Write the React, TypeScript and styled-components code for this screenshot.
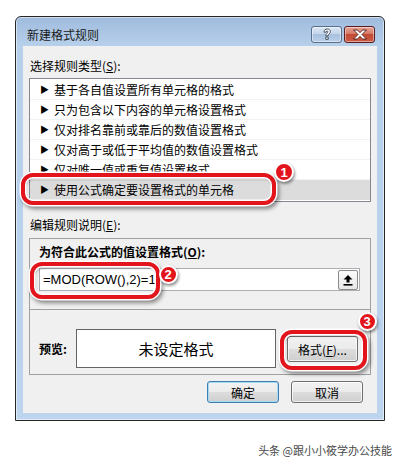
import React from "react";
import styled, { createGlobalStyle } from "styled-components";

const Global = createGlobalStyle`
  html, body { margin: 0; padding: 0; background: #ffffff; }
  body { font-family: "Noto Sans CJK SC", "Liberation Sans", sans-serif; color: #000; }
  * { box-sizing: border-box; }
`;

const Page = styled.div`
  position: relative;
  width: 401px;
  height: 464px;
  padding: 16px 0 0 15px;
  display: flex;
  flex-direction: column;
`;

const Window = styled.div`
  width: 370px;
  height: 405px;
  border: 1px solid #262626;
  border-radius: 6px 6px 0 0;
  background: linear-gradient(to bottom, #9fbbdd 0px, #b6cfea 28px, #bcd4ee 100%);
  padding: 0 7px 7px 7px;
  display: flex;
  flex-direction: column;
  box-shadow: inset 0 0 0 1px rgba(255, 255, 255, 0.55);
`;

const TitleBar = styled.div`
  height: 29px;
  display: flex;
  align-items: flex-start;
  padding-left: 4px;
`;

const Title = styled.div`
  margin-top: 9px;
  line-height: 17px;
  font-size: 12px;
  color: #1b1b1b;
  flex: 1;
`;

const CaptionButtons = styled.div`
  margin-top: 9px;
  margin-right: 2px;
  display: flex;
  gap: 2px;
`;

const CaptionButton = styled.div<{ $close?: boolean }>`
  width: 31px;
  height: 17px;
  border-radius: 3px;
  border: 1px solid ${(p) => (p.$close ? "#5a1e1e" : "#5b6f89")};
  background: ${(p) =>
    p.$close
      ? "linear-gradient(to bottom, #e8a396 0%, #d67a68 45%, #c24a35 50%, #cc5a45 100%)"
      : "linear-gradient(to bottom, #dce7f4 0%, #c4d5ea 45%, #a9c1df 50%, #b9cfe9 100%)"};
  box-shadow: inset 0 0 0 1px rgba(255, 255, 255, 0.45);
  display: flex;
  align-items: center;
  justify-content: center;
`;

const Content = styled.div`
  flex: 1;
  background: #f0f0f0;
  padding: 12px 6px 0 6px;
  display: flex;
  flex-direction: column;
`;

const SectionLabel = styled.div<{ $mt?: number }>`
  font-size: 12px;
  line-height: 16px;
  padding-left: 1px;
  margin-top: ${(p) => p.$mt ?? 0}px;
  color: #000;
  u { text-decoration: underline; text-underline-offset: 1px; }
`;

const ListBox = styled.div`
  margin-top: 4px;
  height: 124px;
  border: 1px solid #828790;
  background: #ffffff;
  padding-top: 1px;
  display: flex;
  flex-direction: column;
`;

const ListRow = styled.div<{ $selected?: boolean }>`
  height: 20px;
  display: flex;
  align-items: center;
  padding-left: 10px;
  font-size: 12px;
  background: ${(p) => (p.$selected ? "#dcdcdc" : "transparent")};
  border-bottom: 1px solid ${(p) => (p.$selected ? "transparent" : "#f2f2f2")};
`;

const Arrow = styled.span`
  font-size: 9px;
  width: 14px;
  color: #000;
`;

const GroupBox = styled.div`
  margin-top: 5px;
  border: 1px solid #a0a0a0;
  display: flex;
  flex-direction: column;
`;

const GroupTop = styled.div`
  padding: 5px 10px 18px 9px;
  display: flex;
  flex-direction: column;
  border-bottom: 1px solid #a0a0a0;
`;

const BoldLabel = styled.div`
  font-size: 12px;
  line-height: 16px;
  font-weight: bold;
  u { text-decoration: underline; text-underline-offset: 1px; }
`;

const FormulaInput = styled.div`
  margin-top: 8px;
  height: 23px;
  border: 1px solid #abadb3;
  background: #ffffff;
  display: flex;
  align-items: center;
  justify-content: space-between;
  padding: 0 1px 0 3px;
`;

const FormulaText = styled.span`
  font-family: "Liberation Sans", "Noto Sans", sans-serif;
  font-size: 13px;
  color: #000;
`;

const CollapseButton = styled.div`
  width: 20px;
  height: 20px;
  border: 1px solid #8a8a8a;
  border-radius: 2px;
  background: linear-gradient(to bottom, #fbfbfb, #e6e6e6);
  display: flex;
  align-items: center;
  justify-content: center;
`;

const PreviewRow = styled.div`
  padding: 19px 12px 6px 9px;
  display: flex;
  align-items: center;
`;

const PreviewLabel = styled(BoldLabel)`
  width: 37px;
`;

const PreviewBox = styled.div`
  width: 200px;
  height: 39px;
  border: 1px solid #646464;
  background: #ffffff;
  display: flex;
  align-items: center;
  justify-content: center;
  font-size: 15px;
`;

const WinButton = styled.div<{ $w: number; $h: number; $default?: boolean }>`
  width: ${(p) => p.$w}px;
  height: ${(p) => p.$h}px;
  border: 1px solid ${(p) => (p.$default ? "#3c7fb1" : "#707070")};
  border-radius: 3px;
  background: linear-gradient(to bottom, #f2f2f2 0%, #ebebeb 50%, #dddddd 51%, #cfcfcf 100%);
  box-shadow: inset 0 0 0 1px ${(p) => (p.$default ? "#a6d9f4" : "rgba(255,255,255,0.7)")};
  display: flex;
  align-items: center;
  justify-content: center;
  font-size: 12px;
  color: #000;
  u { text-decoration: underline; text-underline-offset: 1px; }
`;

const FormatButton = styled(WinButton)`
  margin-left: 11px;
  align-self: flex-start;
  margin-top: 7px;
`;

const ButtonRow = styled.div`
  margin-top: 6px;
  padding-right: 8px;
  display: flex;
  justify-content: flex-end;
  gap: 12px;
`;

const Watermark = styled.div`
  margin-top: 22px;
  padding-right: 9px;
  width: 386px;
  text-align: right;
  font-size: 11px;
  line-height: 14px;
  color: #4a4a4a;
  text-shadow: 0 0 1px #ffffff;
`;

const Callout = styled.div<{ $x: number; $y: number; $w: number; $h: number }>`
  position: absolute;
  left: ${(p) => p.$x}px;
  top: ${(p) => p.$y}px;
  width: ${(p) => p.$w}px;
  height: ${(p) => p.$h}px;
  border: 4px solid #e3141b;
  border-radius: 12px;
  box-shadow: 0 0 0 1.5px #ffffff, inset 0 0 0 1.5px #ffffff, 2px 3px 4px 1px rgba(0, 0, 0, 0.45),
    inset 1px 2px 3px rgba(0, 0, 0, 0.35);
  pointer-events: none;
`;

const Badge = styled.div<{ $x: number; $y: number; $d: number }>`
  position: absolute;
  left: ${(p) => p.$x - p.$d / 2}px;
  top: ${(p) => p.$y - p.$d / 2}px;
  width: ${(p) => p.$d}px;
  height: ${(p) => p.$d}px;
  border-radius: 50%;
  background: #e3141b;
  border: 2px solid #ffffff;
  box-shadow: 1px 2px 3px rgba(0, 0, 0, 0.45);
  color: #ffffff;
  font-family: "Liberation Sans", sans-serif;
  font-weight: bold;
  font-size: 13px;
  display: flex;
  align-items: center;
  justify-content: center;
  line-height: 1;
`;

const items = [
  "基于各自值设置所有单元格的格式",
  "只为包含以下内容的单元格设置格式",
  "仅对排名靠前或靠后的数值设置格式",
  "仅对高于或低于平均值的数值设置格式",
  "仅对唯一值或重复值设置格式",
  "使用公式确定要设置格式的单元格",
];

export default function App() {
  return (
    <>
      <Global />
      <Page>
        <Window>
          <TitleBar>
            <Title>新建格式规则</Title>
            <CaptionButtons>
              <CaptionButton>
                <svg width="12" height="13" viewBox="0 0 12 13">
                  <path
                    d="M3 4.2 C3 2 4.6 1 6.2 1 C8 1 9.4 2.1 9.4 3.8 C9.4 5.6 7.2 6 7.2 7.8 L4.8 7.8 C4.8 5.5 7 5 7 3.9 C7 3.3 6.6 3 6.1 3 C5.5 3 5.2 3.4 5.2 4.2 Z M4.8 9 L7.2 9 L7.2 11.4 L4.8 11.4 Z"
                    fill="#ffffff"
                    stroke="#39475a"
                    strokeWidth="0.9"
                  />
                </svg>
              </CaptionButton>
              <CaptionButton $close>
                <svg width="16" height="11" viewBox="0 0 16 11">
                  <path
                    d="M1.5 1 L5.3 1 L8 3.6 L10.7 1 L14.5 1 L10 5.5 L14.5 10 L10.7 10 L8 7.4 L5.3 10 L1.5 10 L6 5.5 Z"
                    fill="#ffffff"
                    stroke="#4a1a14"
                    strokeWidth="0.9"
                  />
                </svg>
              </CaptionButton>
            </CaptionButtons>
          </TitleBar>
          <Content>
            <SectionLabel>
              选择规则类型(<u>S</u>):
            </SectionLabel>
            <ListBox>
              {items.map((t, i) => (
                <ListRow key={t} $selected={i === 5}>
                  <Arrow>▶</Arrow>
                  {t}
                </ListRow>
              ))}
            </ListBox>
            <SectionLabel $mt={15}>
              编辑规则说明(<u>E</u>):
            </SectionLabel>
            <GroupBox>
              <GroupTop>
                <BoldLabel>
                  为符合此公式的值设置格式(<u>O</u>):
                </BoldLabel>
                <FormulaInput>
                  <FormulaText>=MOD(ROW(),2)=1</FormulaText>
                  <CollapseButton>
                    <svg width="12" height="12" viewBox="0 0 12 12">
                      <path d="M6 1 L10.5 5.5 L7.5 5.5 L7.5 8.5 L4.5 8.5 L4.5 5.5 L1.5 5.5 Z" fill="#000" />
                      <rect x="1.5" y="10" width="9" height="1.6" fill="#000" />
                    </svg>
                  </CollapseButton>
                </FormulaInput>
              </GroupTop>
              <PreviewRow>
                <PreviewLabel>预览:</PreviewLabel>
                <PreviewBox>未设定格式</PreviewBox>
                <FormatButton $w={71} $h={26}>
                  格式(<u>F</u>)...
                </FormatButton>
              </PreviewRow>
            </GroupBox>
            <ButtonRow>
              <WinButton $w={72} $h={22} $default>
                确定
              </WinButton>
              <WinButton $w={72} $h={22}>
                取消
              </WinButton>
            </ButtonRow>
          </Content>
        </Window>
        <Watermark>头条 @跟小小筱学办公技能</Watermark>

        <Callout $x={21} $y={173} $w={255} $h={32} />
        <Badge $x={284} $y={172} $d={20}>1</Badge>
        <Callout $x={30} $y={262} $w={130} $h={37} />
        <Badge $x={168} $y={274} $d={19}>2</Badge>
        <Callout $x={280} $y={330} $w={87} $h={40} />
        <Badge $x={367} $y={321} $d={19}>3</Badge>
      </Page>
    </>
  );
}
